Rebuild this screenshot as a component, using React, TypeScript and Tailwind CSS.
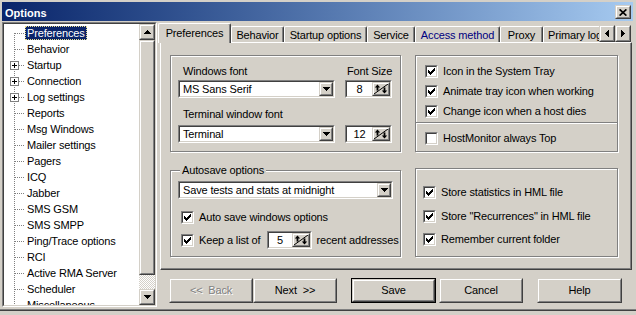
import React from 'react';

type BoxProps = { className?: string; inner?: string; children?: React.ReactNode };

// win2000 style 3d frames
function Raised({ className = '', inner = '', children }: BoxProps) {
  return (
    <div className={`border border-t-[#d4d0c8] border-l-[#d4d0c8] border-r-[#404040] border-b-[#404040] bg-[#d4d0c8] ${className}`}>
      <div className={`h-full w-full border border-t-white border-l-white border-r-[#808080] border-b-[#808080] ${inner}`}>
        {children}
      </div>
    </div>
  );
}

function Sunken({ className = '', inner = '', children }: BoxProps) {
  return (
    <div className={`border border-t-[#808080] border-l-[#808080] border-r-white border-b-white ${className}`}>
      <div className={`h-full w-full border border-t-[#404040] border-l-[#404040] border-r-[#d4d0c8] border-b-[#d4d0c8] bg-white ${inner}`}>
        {children}
      </div>
    </div>
  );
}

const TRI: Record<string, { w: number; h: number; r: number[][] }> = {
  down: { w: 7, h: 4, r: [[0, 0, 7, 1], [1, 1, 5, 1], [2, 2, 3, 1], [3, 3, 1, 1]] },
  up: { w: 7, h: 4, r: [[3, 0, 1, 1], [2, 1, 3, 1], [1, 2, 5, 1], [0, 3, 7, 1]] },
  left: { w: 4, h: 7, r: [[3, 0, 1, 7], [2, 1, 1, 5], [1, 2, 1, 3], [0, 3, 1, 1]] },
  right: { w: 4, h: 7, r: [[0, 0, 1, 7], [1, 1, 1, 5], [2, 2, 1, 3], [3, 3, 1, 1]] },
};

function Tri({ dir }: { dir: 'up' | 'down' | 'left' | 'right' }) {
  const t = TRI[dir];
  return (
    <svg width={t.w} height={t.h} shapeRendering="crispEdges">
      {t.r.map(([x, y, w, h], i) => (
        <rect key={i} x={x} y={y} width={w} height={h} fill="#000" />
      ))}
    </svg>
  );
}

function CheckBox({ checked }: { checked?: boolean }) {
  const starts = [2, 3, 4, 3, 2, 1, 0];
  return (
    <Sunken className="w-[13px] h-[13px] shrink-0">
      {checked && (
        <svg width="9" height="9" shapeRendering="crispEdges">
          {starts.map((s, c) => (
            <rect key={c} x={1 + c} y={1 + s} width="1" height="3" fill="#000" />
          ))}
        </svg>
      )}
    </Sunken>
  );
}

function Check({ label, checked = true }: { label: string; checked?: boolean }) {
  return (
    <div className="h-[20px] flex items-center gap-[5px] whitespace-nowrap">
      <CheckBox checked={checked} />
      <span>{label}</span>
    </div>
  );
}

function Combo({ value, className = '' }: { value: string; className?: string }) {
  return (
    <Sunken className={`h-[18px] ${className}`} inner="flex items-center">
      <span className="flex-1 pl-[3px] whitespace-nowrap overflow-hidden">{value}</span>
      <Raised className="w-[14px] h-full" inner="flex items-center justify-center">
        <Tri dir="down" />
      </Raised>
    </Sunken>
  );
}

function SpinIcon() {
  return (
    <svg width="14" height="10" viewBox="0 0 14 10">
      <path d="M0 10 L14 0" stroke="#000" strokeWidth="1" />
      <path d="M0.8 3.6 L3.5 0.4 L6.2 3.6 Z" fill="#000" />
      <rect x="2.6" y="3" width="1.8" height="3.6" fill="#000" />
      <path d="M7.8 6.4 L10.5 9.6 L13.2 6.4 Z" fill="#000" />
      <rect x="9.6" y="3.4" width="1.8" height="3.6" fill="#000" />
    </svg>
  );
}

function Spin({ value, className = '' }: { value: string; className?: string }) {
  return (
    <Sunken className={`h-[18px] shrink-0 ${className}`} inner="flex">
      <span className="flex-1 text-center leading-[14px]">{value}</span>
      <Raised className="w-[18px] h-full" inner="flex items-center justify-center">
        <SpinIcon />
      </Raised>
    </Sunken>
  );
}

const treeItems = [
  { label: 'Preferences', selected: true },
  { label: 'Behavior' },
  { label: 'Startup', plus: true },
  { label: 'Connection', plus: true },
  { label: 'Log settings', plus: true },
  { label: 'Reports' },
  { label: 'Msg Windows' },
  { label: 'Mailer settings' },
  { label: 'Pagers' },
  { label: 'ICQ' },
  { label: 'Jabber' },
  { label: 'SMS GSM' },
  { label: 'SMS SMPP' },
  { label: 'Ping/Trace options' },
  { label: 'RCI' },
  { label: 'Active RMA Server' },
  { label: 'Scheduler' },
  { label: 'Miscellaneous' },
];

function TreeRow({ label, selected, plus, first }: { label: string; selected?: boolean; plus?: boolean; first?: boolean }) {
  return (
    <div className="h-[16px] flex items-center">
      <svg width="21" height="16" className="shrink-0" shapeRendering="crispEdges">
        <line x1="10.5" y1={first ? 8 : 0} x2="10.5" y2="16" stroke="#808080" strokeDasharray="1 1" />
        <line x1={plus ? 15 : 11} y1="8.5" x2="21" y2="8.5" stroke="#808080" strokeDasharray="1 1" />
        {plus && (
          <>
            <rect x="6.5" y="4.5" width="8" height="8" fill="#fff" stroke="#808080" />
            <rect x="8" y="8" width="5" height="1" fill="#000" />
            <rect x="10" y="6" width="1" height="5" fill="#000" />
          </>
        )}
      </svg>
      <span
        className={`h-[14px] leading-[14px] px-[2px] whitespace-nowrap ${
          selected ? 'bg-[#0a246a] text-white outline-1 outline-dotted outline-[#e8dc8c] -outline-offset-1' : ''
        }`}
      >
        {label}
      </span>
    </div>
  );
}

const tabs = [
  { label: 'Behavior', w: 'w-[53px]' },
  { label: 'Startup options', w: 'w-[83px]' },
  { label: 'Service', w: 'w-[48px]' },
  { label: 'Access method', w: 'w-[85px]', hot: true },
  { label: 'Proxy', w: 'w-[43px]' },
  { label: 'Primary log', w: 'w-[64px]' },
];

function Btn({ label, w = 'w-[84px]', disabled, def }: { label: string; w?: string; disabled?: boolean; def?: boolean }) {
  const text = (
    <span className={`whitespace-pre ${disabled ? 'text-[#808080] [text-shadow:1px_1px_0_#fff]' : ''}`}>{label}</span>
  );
  if (def) {
    return (
      <div className={`h-full ${w} border border-black`}>
        <Raised className="h-full w-full" inner="flex items-center justify-center">
          {text}
        </Raised>
      </div>
    );
  }
  return (
    <Raised className={`h-full ${w}`} inner="flex items-center justify-center">
      {text}
    </Raised>
  );
}

const group = 'border border-[#808080] shadow-[inset_1px_1px_#fff,1px_1px_#fff]';

export default function App() {
  return (
    <div className="w-[636px] h-[315px] bg-[#d4d0c8] font-['Liberation_Sans',Arial,sans-serif] text-[11px] leading-[13px] tracking-[-0.15px] text-black overflow-hidden select-none">
      <div className="h-[311px] pt-[2px] pl-[2px] pr-[3px] border-b border-b-[#404040] shadow-[inset_0_-1px_#808080] flex flex-col">
        {/* title bar */}
        <div className="h-[19px] shrink-0 flex items-start bg-linear-to-r from-[#0a246a] to-[#a6caf0]">
          <span className="ml-[3px] mt-[5px] font-bold text-white tracking-normal">Options</span>
          <Raised className="ml-auto mr-[2px] mt-[3px] w-[16px] h-[14px]" inner="flex items-center justify-center">
            <svg width="8" height="7" viewBox="0 0 8 7">
              <path d="M0.6 0.4 L7.4 6.6 M7.4 0.4 L0.6 6.6" stroke="#000" strokeWidth="1.7" />
            </svg>
          </Raised>
        </div>

        <div className="flex flex-1">
          {/* tree */}
          <Sunken className="mt-[1px] w-[155px] h-[285px] shrink-0" inner="flex">
            <div className="flex-1 overflow-hidden pt-[1px]">
              {treeItems.map((t, i) => (
                <TreeRow key={t.label} {...t} first={i === 0} />
              ))}
            </div>
            <div className="w-[16px] flex flex-col">
              <Raised className="h-[16px] w-[16px]" inner="flex items-center justify-center">
                <Tri dir="up" />
              </Raised>
              <Raised className="h-[235px] w-[16px]" />
              <div className="flex-1 bg-[repeating-conic-gradient(#ffffff_0_25%,#d4d0c8_0_50%)] bg-[length:2px_2px]" />
              <Raised className="h-[16px] w-[16px]" inner="flex items-center justify-center">
                <Tri dir="down" />
              </Raised>
            </div>
          </Sunken>

          {/* tabs + page */}
          <div className="ml-[1px] w-[475px] flex flex-col">
            <div className="h-[22px] flex items-end">
              <div className="w-[441px] h-full flex items-end overflow-hidden">
                <div className="relative z-10 h-[20px] w-[73px] shrink-0 bg-[#d4d0c8] border-t border-l border-r border-white border-r-[#404040] shadow-[inset_-1px_0_#808080] rounded-t-[2px] flex items-center justify-center">
                  Preferences
                </div>
                {tabs.map((t) => (
                  <div
                    key={t.label}
                    className={`h-[16px] mb-[1px] shrink-0 ${t.w} border-t border-l border-r border-white border-r-[#404040] shadow-[inset_-1px_0_#808080] rounded-t-[2px] flex items-center justify-center pt-[1px] whitespace-nowrap ${
                      t.hot ? 'text-[#000080]' : ''
                    }`}
                  >
                    {t.label}
                  </div>
                ))}
              </div>
              <Raised className="w-[16px] h-[17px] mb-[1px]" inner="flex items-center justify-center">
                <Tri dir="left" />
              </Raised>
              <Raised className="w-[16px] h-[17px] mb-[1px]" inner="flex items-center justify-center">
                <Tri dir="right" />
              </Raised>
            </div>

            <div className="ml-[2px] -mt-[1px] h-[228px] w-[472px] border border-t-white border-l-white border-r-[#404040] border-b-[#404040] shadow-[inset_-1px_-1px_#808080] pl-[9px] pt-[12px] flex gap-[14px]">
              {/* left column */}
              <div className="w-[231px] flex flex-col">
                <div className={`${group} h-[97px] pl-[7px] pt-[9px] grid grid-cols-[157px_47px] gap-x-[10px] content-start`}>
                  <span className="pl-[5px] h-[13px]">Windows font</span>
                  <span className="pl-[2px] h-[13px] whitespace-nowrap">Font Size</span>
                  <Combo value="MS Sans Serif" className="mt-[2px]" />
                  <Spin value="8" className="mt-[2px]" />
                  <span className="pl-[5px] h-[13px] mt-[10px]">Terminal window font</span>
                  <span className="mt-[10px]" />
                  <Combo value="Terminal" className="mt-[4px]" />
                  <Spin value="12" className="mt-[4px]" />
                </div>

                <div className={`${group} mt-[18px] h-[87px] pl-[7px] flex flex-col`}>
                  <span className="-mt-[7px] ml-[2px] self-start bg-[#d4d0c8] px-[2px]">Autosave options</span>
                  <Combo value="Save tests and stats at midnight" className="mt-[4px] w-[215px]" />
                  <div className="mt-[8px] pl-[3px]">
                    <Check label="Auto save windows options" />
                  </div>
                  <div className="mt-[3px] pl-[3px] h-[20px] flex items-center whitespace-nowrap">
                    <CheckBox checked />
                    <span className="ml-[5px]">Keep a list of</span>
                    <Spin value="5" className="ml-[6px] w-[45px]" />
                    <span className="ml-[5px]">recent addresses</span>
                  </div>
                </div>
              </div>

              {/* right column */}
              <div className="w-[203px] flex flex-col">
                <div className={`${group} h-[97px] pl-[9px] pt-[5px]`}>
                  <Check label="Icon in the System Tray" />
                  <Check label="Animate tray icon when working" />
                  <Check label="Change icon when a host dies" />
                  <div className="-ml-[9px] mt-[1px] h-[2px] border-t border-t-[#808080] border-b border-b-white" />
                  <div className="mt-[4px]">
                    <Check label="HostMonitor always Top" checked={false} />
                  </div>
                </div>

                <div className={`${group} mt-[16px] h-[89px] pl-[7px] pt-[13px]`}>
                  <Check label="Store statistics in HML file" />
                  <div className="mt-[4px]">
                    <Check label={'Store "Recurrences" in HML file'} />
                  </div>
                  <div className="mt-[3px]">
                    <Check label="Remember current folder" />
                  </div>
                </div>
              </div>
            </div>

            <div className="mt-[8px] ml-[11px] h-[25px] flex">
              <Btn label="<<  Back" disabled />
              <Btn label="Next  >>" />
              <div className="ml-[14px] h-full">
                <Btn label="Save" w="w-[85px]" def />
              </div>
              <div className="ml-[3px] h-full">
                <Btn label="Cancel" />
              </div>
              <div className="ml-[14px] h-full">
                <Btn label="Help" w="w-[85px]" />
              </div>
            </div>
          </div>
        </div>
      </div>
    </div>
  );
}
